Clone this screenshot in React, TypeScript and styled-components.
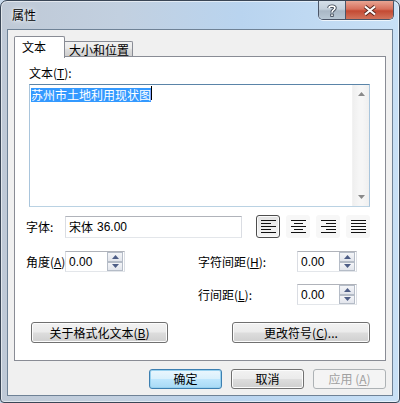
import React from "react";
import styled, { createGlobalStyle, css } from "styled-components";

const GlobalStyle = createGlobalStyle`
  html, body { margin: 0; padding: 0; background: #c9daec; }
  body {
    font-family: "Noto Sans CJK SC", "Liberation Sans", sans-serif;
    font-size: 12px;
    color: #000;
  }
  * { box-sizing: border-box; }
`;

const Window = styled.div`
  width: 400px;
  height: 403px;
  border: 1px solid #3a4656;
  border-radius: 7px 7px 4px 4px;
  background: linear-gradient(to right, #bfc9d6 0%, #c2d0e0 30%, #b9d4ef 60%, #c8e0f6 100%);
  box-shadow: inset 0 0 0 1px rgba(255, 255, 255, 0.55);
  display: flex;
  flex-direction: column;
  overflow: hidden;
`;

const TitleBar = styled.div`
  height: 28px;
  display: flex;
  align-items: flex-start;
  padding-left: 11px;
  padding-right: 5px;
`;

const Title = styled.div`
  margin-top: 7px;
  line-height: 14px;
  font-size: 12px;
  color: #000;
  text-shadow: 0 0 6px rgba(255, 255, 255, 0.9), 0 0 3px rgba(255, 255, 255, 0.9);
`;

const CaptionGroup = styled.div`
  margin-left: auto;
  display: flex;
  height: 19px;
  border: 1px solid #4b5567;
  border-top: none;
  border-radius: 0 0 5px 5px;
  overflow: hidden;
  box-shadow: 0 1px 0 rgba(255, 255, 255, 0.7);
`;

const CaptionButton = styled.div<{ $kind: "help" | "close" }>`
  height: 100%;
  display: flex;
  align-items: center;
  justify-content: center;
  ${(p) =>
    p.$kind === "help"
      ? css`
          width: 27px;
          background: linear-gradient(#d5dfe9 0%, #c3cfdb 45%, #a9b7c5 55%, #b8c7d4 100%);
          border-right: 1px solid #4b5567;
        `
      : css`
          width: 47px;
          background: linear-gradient(#e8a493 0%, #d7705c 45%, #c44a33 55%, #d2745c 100%);
        `}
`;

const Client = styled.div`
  flex: 1;
  margin: 0 6px 6px 6px;
  border: 1px solid #6f8296;
  background: #f0f0f0;
  padding: 6px;
  display: flex;
  flex-direction: column;
`;

const TabStrip = styled.div`
  height: 20px;
  display: flex;
  align-items: flex-end;
`;

const Tab = styled.div<{ $active?: boolean }>`
  font-size: 12px;
  line-height: 14px;
  border: 1px solid #898c95;
  border-bottom: none;
  ${(p) =>
    p.$active
      ? css`
          position: relative;
          z-index: 1;
          width: 51px;
          height: 22px;
          margin-bottom: -2px;
          padding: 3px 0 0 7px;
          background: #fff;
          border-radius: 2px 2px 0 0;
        `
      : css`
          width: 69px;
          height: 15px;
          margin-left: -1px;
          padding: 1px 0 0 5px;
          background: linear-gradient(#f2f2f2 0%, #ebebeb 45%, #dddddd 55%, #cfcfcf 100%);
          border-left: none;
          border-radius: 0 2px 0 0;
        `}
`;

const Panel = styled.div`
  flex: 1;
  border: 1px solid #898c95;
  background: #fff;
  padding: 9px 15px 0 14px;
  display: flex;
  flex-direction: column;
`;

const Label = styled.div`
  line-height: 14px;
  font-size: 12px;
  white-space: nowrap;
`;

const Key = styled.span`
  text-decoration: underline;
`;

const TextArea = styled.div`
  margin-top: 4px;
  width: 341px;
  height: 123px;
  border: 1px solid;
  border-color: #5a84a8 #a9c5dc #bad2e3 #a9c5dc;
  background: #fff;
  padding: 1px 0 0 1px;
  position: relative;
`;

const Selected = styled.span`
  background: #3399ff;
  color: #fff;
  line-height: 14px;
  display: inline-block;
`;

const Caret = styled.span`
  display: inline-block;
  width: 1px;
  height: 14px;
  background: #000;
  vertical-align: top;
`;

const ScrollBar = styled.div`
  position: absolute;
  top: 0;
  right: 0;
  bottom: 0;
  width: 17px;
  background: linear-gradient(to right, #efefef, #f6f6f6 40%, #f6f6f6 60%, #efefef);
  border-left: 1px solid #f2f2f2;
  display: flex;
  flex-direction: column;
  justify-content: space-between;
  align-items: center;
  padding: 7px 0 7px;
`;

const Row = styled.div<{ $top: number; $h: number; $left?: number }>`
  margin-top: ${(p) => p.$top}px;
  height: ${(p) => p.$h}px;
  margin-left: ${(p) => p.$left ?? -3}px;
  display: flex;
  align-items: center;
`;

const FieldLabel = styled(Label)<{ $w: number }>`
  width: ${(p) => p.$w}px;
`;

const Field = styled.div<{ $w: number }>`
  width: ${(p) => p.$w}px;
  height: 22px;
  border: 1px solid;
  border-color: #b0b3ba #dadde3 #e3e6ea #dadde3;
  background: #fff;
  padding-left: 3px;
  display: flex;
  align-items: center;
  font-family: "Liberation Sans", "Noto Sans CJK SC", sans-serif;
  font-size: 12px;
`;

const CjkText = styled.span`
  font-family: "Noto Sans CJK SC", sans-serif;
  margin-right: 4px;
`;

const AlignGroup = styled.div`
  margin-left: 14px;
  display: flex;
  gap: 6px;
`;

const AlignButton = styled.div<{ $active?: boolean }>`
  width: 24px;
  height: 23px;
  display: flex;
  align-items: center;
  justify-content: center;
  border-radius: 3px;
  ${(p) =>
    p.$active
      ? css`
          border: 1px solid #4d4d4d;
          background: linear-gradient(#e4e4e4, #f4f4f4);
          box-shadow: inset 0 0 0 1px #fafafa;
        `
      : css`
          border: 1px solid transparent;
          background: #f7f7f7;
        `}
`;

const SpinGrid = styled.div`
  margin-top: 13px;
  margin-left: -3px;
  display: grid;
  grid-template-columns: 39px 60px 73px 99px 60px;
  grid-auto-rows: 21px;
  row-gap: 12px;
  align-items: center;
`;

const Spin = styled.div<{ $col?: number }>`
  grid-column: ${(p) => p.$col ?? "auto"};
  height: 21px;
  border: 1px solid;
  border-color: #b0b3ba #dadde3 #e3e6ea #dadde3;
  background: #fff;
  display: flex;
  align-items: center;
  padding: 0 1px 0 3px;
  font-family: "Liberation Sans", sans-serif;
  font-size: 12px;
`;

const SpinValue = styled.span`
  flex: 1;
`;

const SpinButtons = styled.div`
  display: flex;
  flex-direction: column;
  height: 19px;
`;

const SpinButton = styled.div`
  width: 16px;
  height: 9.5px;
  border: 1px solid #b5bcc7;
  background: linear-gradient(#f4f5f8, #e2e5ec);
  display: flex;
  align-items: center;
  justify-content: center;
`;

const GridLabel = styled(Label)<{ $col: number }>`
  grid-column: ${(p) => p.$col};
`;

const ButtonRow = styled.div`
  margin-top: 17px;
  margin-left: 2px;
  display: flex;
  gap: 64px;
`;

const PushButton = styled.div<{ $w: number; $variant?: "default" | "disabled" }>`
  width: ${(p) => p.$w}px;
  height: 21px;
  border: 1px solid #707070;
  border-radius: 3px;
  background: linear-gradient(#f2f2f2 0%, #ebebeb 48%, #dddddd 52%, #cfcfcf 100%);
  box-shadow: inset 0 0 0 1px #fcfcfc;
  display: flex;
  align-items: center;
  justify-content: center;
  line-height: 14px;
  font-size: 12px;
  white-space: nowrap;
  ${(p) =>
    p.$variant === "default" &&
    css`
      border-color: #3c7fb1;
      background: linear-gradient(#eaf6fd 0%, #d9f0fc 48%, #bee6fd 52%, #a7d9f5 100%);
      box-shadow: inset 0 0 0 1px #98d1ef;
    `}
  ${(p) =>
    p.$variant === "disabled" &&
    css`
      border-color: #adb2b5;
      background: #f4f4f4;
      box-shadow: none;
      color: #a0a0a0;
    `}
`;

const DialogButtons = styled.div`
  margin-top: 8px;
  display: flex;
  justify-content: flex-end;
  gap: 9px;
`;

const DialogButton = styled(PushButton)`
  height: 20px;
`;

const ArrowUp = ({ color = "#4d5d86" }: { color?: string }) => (
  <svg width="7" height="4" viewBox="0 0 7 4">
    <path d="M3.5 0 L7 4 L0 4 Z" fill={color} />
  </svg>
);
const ArrowDown = ({ color = "#4d5d86" }: { color?: string }) => (
  <svg width="7" height="4" viewBox="0 0 7 4">
    <path d="M0 0 L7 0 L3.5 4 Z" fill={color} />
  </svg>
);

type AlignKind = "left" | "center" | "right" | "justify";
const alignLines: Record<AlignKind, [number, number][]> = {
  left: [[0, 15], [0, 10], [0, 15], [0, 10], [0, 15]],
  center: [[0, 15], [3, 12], [0, 15], [3, 12], [0, 15]],
  right: [[0, 15], [5, 15], [0, 15], [5, 15], [0, 15]],
  justify: [[0, 15], [0, 15], [0, 15], [0, 15], [0, 15]],
};

const AlignIcon = ({ kind }: { kind: AlignKind }) => (
  <svg width="15" height="13" viewBox="0 0 15 13">
    {alignLines[kind].map(([a, b], i) => (
      <rect key={i} x={a} y={i * 3} width={b - a} height={1} fill="#111" />
    ))}
  </svg>
);

const SpinBox = ({ value, col }: { value: string; col?: number }) => (
  <Spin $col={col}>
    <SpinValue>{value}</SpinValue>
    <SpinButtons>
      <SpinButton>
        <ArrowUp />
      </SpinButton>
      <SpinButton>
        <ArrowDown />
      </SpinButton>
    </SpinButtons>
  </Spin>
);

export default function App() {
  return (
    <>
      <GlobalStyle />
      <Window>
        <TitleBar>
          <Title>属性</Title>
          <CaptionGroup>
            <CaptionButton $kind="help">
              <svg width="10" height="13" viewBox="0 0 10 13">
                <path
                  d="M2 4 C2 1.5 8 1.5 8 4 C8 6 5 6 5 8.5"
                  fill="none"
                  stroke="#3b4452"
                  strokeWidth="3.4"
                />
                <rect x="3.3" y="9.6" width="3.4" height="3.2" fill="#3b4452" />
                <path
                  d="M2 4 C2 1.5 8 1.5 8 4 C8 6 5 6 5 8.5"
                  fill="none"
                  stroke="#fff"
                  strokeWidth="1.6"
                />
                <rect x="4.2" y="10.4" width="1.6" height="1.6" fill="#fff" />
              </svg>
            </CaptionButton>
            <CaptionButton $kind="close">
              <svg width="14" height="11" viewBox="0 0 14 11">
                <path d="M2 1.5 L12 9.5 M12 1.5 L2 9.5" stroke="#5a2a22" strokeWidth="4" />
                <path d="M2 1.5 L12 9.5 M12 1.5 L2 9.5" stroke="#fff" strokeWidth="2.2" />
              </svg>
            </CaptionButton>
          </CaptionGroup>
        </TitleBar>
        <Client>
          <TabStrip>
            <Tab $active>文本</Tab>
            <Tab>大小和位置</Tab>
          </TabStrip>
          <Panel>
            <Label>
              文本(<Key>T</Key>):
            </Label>
            <TextArea>
              <Selected>苏州市土地利用现状图</Selected>
              <Caret />
              <ScrollBar>
                <ArrowUp color="#8a8a8a" />
                <ArrowDown color="#8a8a8a" />
              </ScrollBar>
            </TextArea>
            <Row $top={8} $h={23}>
              <FieldLabel $w={39}>字体:</FieldLabel>
              <Field $w={177}>
                <CjkText>宋体</CjkText>36.00
              </Field>
              <AlignGroup>
                <AlignButton $active>
                  <AlignIcon kind="left" />
                </AlignButton>
                <AlignButton>
                  <AlignIcon kind="center" />
                </AlignButton>
                <AlignButton>
                  <AlignIcon kind="right" />
                </AlignButton>
                <AlignButton>
                  <AlignIcon kind="justify" />
                </AlignButton>
              </AlignGroup>
            </Row>
            <SpinGrid>
              <GridLabel $col={1}>
                角度(<Key>A</Key>):
              </GridLabel>
              <SpinBox value="0.00" col={2} />
              <GridLabel $col={4}>
                字符间距(<Key>H</Key>):
              </GridLabel>
              <SpinBox value="0.00" col={5} />
              <GridLabel $col={4}>
                行间距(<Key>L</Key>):
              </GridLabel>
              <SpinBox value="0.00" col={5} />
            </SpinGrid>
            <ButtonRow>
              <PushButton $w={137}>
                关于格式化文本(<Key>B</Key>)
              </PushButton>
              <PushButton $w={138}>
                更改符号(<Key>C</Key>)...
              </PushButton>
            </ButtonRow>
          </Panel>
          <DialogButtons>
            <DialogButton $w={73} $variant="default">
              确定
            </DialogButton>
            <DialogButton $w={73}>取消</DialogButton>
            <DialogButton $w={73} $variant="disabled">
              应用 (<Key>A</Key>)
            </DialogButton>
          </DialogButtons>
        </Client>
      </Window>
    </>
  );
}
